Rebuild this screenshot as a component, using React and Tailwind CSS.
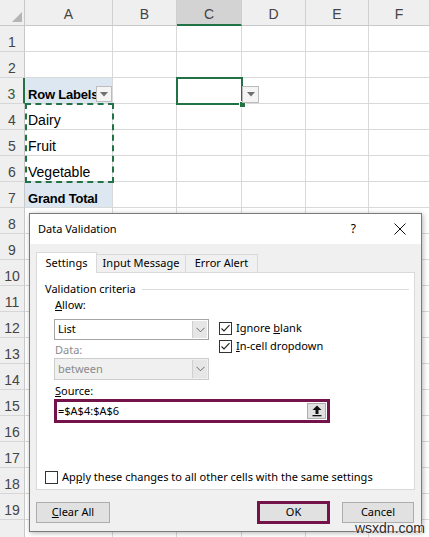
import React from "react";

const colW = ["w-[88px]", "w-[64px]", "w-[65px]", "w-[64px]", "w-[63px]", "flex-1"];
const letters = ["A", "B", "C", "D", "E", "F"];

function DownTri() {
  return (
    <svg width="8" height="5" viewBox="0 0 8 5">
      <polygon points="0,0 8,0 4,4.5" fill="#6f6f6f" />
    </svg>
  );
}

function FilterBtn({ cls }) {
  return (
    <div className={`absolute ${cls} flex items-center justify-center bg-[#f4f4f4] border border-[#bcbcbc]`}>
      <DownTri />
    </div>
  );
}

function Chevron() {
  return (
    <svg width="9" height="6" viewBox="0 0 9 6">
      <polyline points="0.5,0.8 4.5,4.8 8.5,0.8" fill="none" stroke="#6a6a6a" strokeWidth="1" />
    </svg>
  );
}

function Select({ value, disabled }) {
  return (
    <div
      className={`flex w-[155px] border ${
        disabled ? "h-[22px] border-[#cccccc] bg-[#f0f0f0] text-[#8b8b8b]" : "h-[21px] border-[#a5a5a5] bg-white text-black"
      }`}
    >
      <div className="flex-1 flex items-center pl-[3px]">{value}</div>
      <div className="w-[15px] my-px mr-px flex items-center justify-center bg-[#e6e6e6] border-l border-[#cfcfcf]">
        <Chevron />
      </div>
    </div>
  );
}

function Check({ checked }) {
  return (
    <div className="w-[13px] h-[13px] border border-[#333333] bg-white flex items-center justify-center">
      {checked && (
        <svg width="11" height="11" viewBox="0 0 11 11">
          <polyline points="1.5,5.5 4,8 9.5,2.2" fill="none" stroke="#222" strokeWidth="1.1" />
        </svg>
      )}
    </div>
  );
}

export default function App() {
  return (
    <div className="relative w-[430px] h-[537px] overflow-hidden bg-white font-['Liberation_Sans',Arial,sans-serif]">
      {/* column header */}
      <div className="flex h-[26px] bg-[#efefef]">
        <div className="relative w-[25px] border-r border-b border-[#c8c8c8]">
          <svg className="absolute left-[12px] top-[12px]" width="10" height="10" viewBox="0 0 10 10">
            <polygon points="10,0 10,10 0,10" fill="#b5b5b5" />
          </svg>
        </div>
        {letters.map((l, i) => (
          <div
            key={l}
            className={`${colW[i]} flex items-center justify-center pt-[4px] border-r border-[#cfcfcf] text-[14px] text-[#444444] ${
              l === "C" ? "bg-[#d3d3d3] border-b-2 border-b-[#217346]" : "border-b border-b-[#c8c8c8]"
            }`}
          >
            {l}
          </div>
        ))}
      </div>

      {/* rows */}
      {Array.from({ length: 20 }, (_, r) => {
        const n = r + 1;
        return (
          <div key={n} className="flex h-[26px]">
            <div
              className={`w-[25px] flex items-end justify-center bg-[#efefef] border-b border-b-[#d6d6d6] text-[14px] leading-[17px] ${
                n === 3 ? "border-r-2 border-r-[#217346] text-[#2d5a3d]" : "border-r border-r-[#c8c8c8] text-[#444444]"
              }`}
            >
              {n < 20 ? n : ""}
            </div>
            {letters.map((l, i) => {
              let content = null;
              let extra = "";
              if (l === "A") {
                if (n === 3) {
                  content = <span className="font-bold text-[13px] tracking-[-0.2px]">Row Labels</span>;
                  extra = "bg-[#dde7f2]";
                } else if (n === 4) content = "Dairy";
                else if (n === 5) content = "Fruit";
                else if (n === 6) content = "Vegetable";
                else if (n === 7) {
                  content = <span className="font-bold text-[13px] tracking-[-0.2px]">Grand Total</span>;
                  extra = "bg-[#dde7f2]";
                }
              }
              return (
                <div
                  key={l}
                  className={`${colW[i]} flex items-end pl-[3px] overflow-hidden whitespace-nowrap border-r border-b border-[#d9d9d9] text-[14px] leading-[17px] text-black ${extra}`}
                >
                  {content}
                </div>
              );
            })}
          </div>
        );
      })}

      {/* overlays on sheet */}
      <div className="absolute left-[25px] top-[103px] w-[89px] h-[80px] border-2 border-dashed border-[#217346]" />
      <FilterBtn cls="left-[96px] top-[86px] w-[16px] h-[16px]" />
      <div className="absolute left-[176px] top-[77px] w-[67px] h-[28px] border-2 border-[#217346]" />
      <div className="absolute left-[239px] top-[101px] w-[7px] h-[7px] bg-[#217346] border border-white" />
      <FilterBtn cls="left-[242px] top-[86px] w-[17px] h-[17px]" />

      {/* dialog */}
      <div className="absolute left-[29px] top-[213px] w-[393px] h-[319px] flex flex-col border border-[#7a7a7a] bg-[#f0f0f0] shadow-[1px_1px_5px_rgba(0,0,0,0.3)] font-['Noto_Sans',sans-serif] text-[11px] text-black">
        <div className="h-[30px] bg-white flex items-center pl-[8px]">
          <span>Data Validation</span>
          <span className="ml-auto mr-[38px] text-[12px]">?</span>
          <svg className="mr-[15px]" width="12" height="12" viewBox="0 0 12 12">
            <path d="M0.5 0.5 L11.5 11.5 M11.5 0.5 L0.5 11.5" stroke="#111" strokeWidth="1" />
          </svg>
        </div>

        <div className="flex-1 flex flex-col px-[6px] pt-[8px]">
          {/* tabs */}
          <div className="flex items-end h-[20px]">
            <div className="relative z-10 w-[61px] h-[21px] -mb-px flex items-center justify-center bg-white border border-b-0 border-[#d9d9d9]">
              Settings
            </div>
            <div className="w-[89px] h-[18px] flex items-center justify-center border-t border-r border-[#d9d9d9]">
              Input Message
            </div>
            <div className="w-[72px] h-[18px] flex items-center justify-center border-t border-r border-[#d9d9d9]">
              Error Alert
            </div>
          </div>

          {/* panel */}
          <div className="h-[218px] flex flex-col border border-[#d9d9d9] bg-white">
            <div className="flex items-center h-[16px] mt-[8px] pl-[8px] pr-[5px]">
              <span>Validation criteria</span>
              <div className="flex-1 h-px bg-[#dcdcdc] ml-[6px]" />
            </div>

            <div className="flex pl-[17px]">
              <div className="flex flex-col">
                <div className="h-[16px] flex items-center pl-px">
                  <span>
                    <span className="underline">A</span>llow:
                  </span>
                </div>
                <div className="mt-[6px]">
                  <Select value="List" />
                </div>
                <div className="h-[16px] mt-[2px] flex items-center pl-px text-[#8b8b8b]">Data:</div>
                <Select value="between" disabled />
              </div>
              <div className="flex flex-col pt-[22px] ml-[10px]">
                <div className="h-[18px] flex items-center gap-[4px]">
                  <Check checked />
                  <span>
                    Ignore <span className="underline">b</span>lank
                  </span>
                </div>
                <div className="h-[18px] flex items-center gap-[4px]">
                  <Check checked />
                  <span>
                    <span className="underline">I</span>n-cell dropdown
                  </span>
                </div>
              </div>
            </div>

            <div className="h-[16px] mt-[3px] pl-[18px] flex items-center">
              <span>
                <span className="underline">S</span>ource:
              </span>
            </div>
            <div className="ml-[17px] w-[276px] h-[24px] border-[3px] border-[#74124a] bg-white flex items-center">
              <span className="flex-1 pl-px">=$A$4:$A$6</span>
              <div className="w-[19px] h-[16px] mr-px bg-[#e1e1e1] border border-[#adadad] flex items-center justify-center">
                <svg width="10" height="12" viewBox="0 0 10 12">
                  <polygon points="5,0.5 9.5,5 6.5,5 6.5,9 3.5,9 3.5,5 0.5,5" fill="#111" />
                  <rect x="0.5" y="10" width="9" height="1.3" fill="#111" />
                </svg>
              </div>
            </div>

            <div className="mt-[46px] pl-[8px] h-[16px] flex items-center gap-[4px]">
              <Check />
              <span>
                Ap<span className="underline">p</span>ly these changes to all other cells with the same settings
              </span>
            </div>
          </div>

          {/* buttons */}
          <div className="flex items-center mt-[11px]">
            <div className="w-[74px] h-[21px] flex items-center justify-center bg-[#e1e1e1] border border-[#adadad]">
              <span>
                <span className="underline">C</span>lear All
              </span>
            </div>
            <div className="ml-auto w-[73px] h-[23px] flex items-center justify-center bg-[#e1e1e1] border-[3px] border-[#74124a]">
              OK
            </div>
            <div className="ml-[12px] mr-px w-[72px] h-[21px] flex items-center justify-center bg-[#e1e1e1] border border-[#adadad]">
              Cancel
            </div>
          </div>
        </div>
      </div>

      <div className="absolute right-[5px] bottom-[1px] text-[14px] leading-[16px] text-[#2a2a2a] font-['Liberation_Sans',Arial,sans-serif] [text-shadow:0_0_2px_#fff,0_0_2px_#fff]">
        wsxdn.com
      </div>
    </div>
  );
}
